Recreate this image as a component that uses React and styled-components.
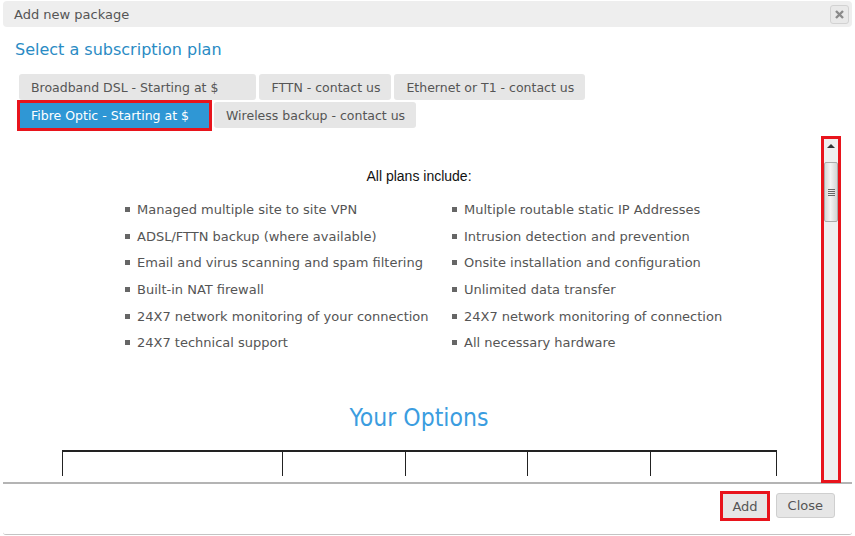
import React from 'react';
import styled, { createGlobalStyle } from 'styled-components';

const GlobalStyle = createGlobalStyle`
  html, body {
    margin: 0;
    padding: 0;
    background: #fff;
  }
  body {
    font-family: "DejaVu Sans", Verdana, sans-serif;
    font-size: 13px;
    color: #555;
  }
`;

const RED = '#e8141c';

const Dialog = styled.div`
  width: 849px;
  margin: 1px 0 0 3px;
  border-bottom: 1px solid #c4c4c4;
  border-radius: 0 0 3px 3px;
  background: #fff;
`;

const TitleBar = styled.div`
  height: 26px;
  display: flex;
  align-items: center;
  justify-content: space-between;
  padding: 0 3px 0 11px;
  background: #eeeeee;
  border-radius: 4px;
  color: #555;
  font-size: 13px;
`;

const CloseX = styled.button`
  width: 19px;
  height: 19px;
  padding: 0;
  display: flex;
  align-items: center;
  justify-content: center;
  border: 1px solid #d2d2d2;
  border-radius: 3px;
  background: #e9e9e9;
`;

const Heading = styled.h2`
  margin: 12px 0 0 12px;
  font-size: 16px;
  font-weight: normal;
  line-height: 22px;
  color: #2a8bc4;
`;

const TabGroup = styled.div`
  margin: 13px 0 0 16px;
  display: flex;
  flex-direction: column;
  gap: 2px;
`;

const TabRow = styled.div`
  display: flex;
  gap: 3px;
`;

const Tab = styled.div`
  height: 26px;
  display: flex;
  align-items: center;
  padding: 0 ${({ $padRight }) => $padRight || 11}px 0 12px;
  border-radius: 3px;
  white-space: nowrap;
  font-size: 12.5px;
  background: ${({ $active }) => ($active ? '#2f97d5' : '#e6e6e6')};
  color: ${({ $active }) => ($active ? '#fff' : '#555')};
  ${({ $active }) => $active && `
    border-radius: 0;
    outline: 3px solid ${RED};
    outline-offset: -1px;
    margin-right: 1px;
    height: 27px;
  `}
`;

const ScrollRegion = styled.div`
  margin-top: 5px;
  display: flex;
  padding-left: 12px;
`;

const Content = styled.div`
  flex: 1;
  height: 342px;
  overflow: hidden;
  padding-top: 34px;
  box-sizing: border-box;
`;

const Lead = styled.div`
  text-align: center;
  font-family: "Liberation Sans", Arial, sans-serif;
  font-size: 14px;
  line-height: 16px;
  color: #111;
`;

const Features = styled.div`
  margin: 12px 0 0 110px;
  display: grid;
  grid-template-columns: 327px 300px;
`;

const FeatureList = styled.ul`
  margin: 0;
  padding: 0;
  list-style: none;
`;

const Feature = styled.li`
  display: flex;
  align-items: center;
  height: 26.7px;
  color: #555;
  white-space: nowrap;

  &::before {
    content: '';
    width: 5px;
    height: 5px;
    margin-right: 7px;
    background: #666;
  }
`;

const OptionsTitle = styled.h3`
  margin: 47px 0 0;
  text-align: center;
  font-family: "DejaVu Sans Condensed", "Liberation Sans Narrow", sans-serif;
  font-size: 24.5px;
  font-weight: normal;
  line-height: 30px;
  color: #3b9de0;
`;

const OptionsTable = styled.table`
  margin: 17px auto 0;
  width: 715px;
  border-collapse: collapse;
  border-top: 2px solid #222;
`;

const Cell = styled.td`
  height: 40px;
  border-left: 1px solid #222;
  border-right: 1px solid #222;
  padding: 0;
`;

const Scrollbar = styled.div`
  width: 16px;
  height: 343px;
  margin-top: 4px;
  position: relative;
  background: #efefef;
  outline: 3px solid ${RED};
  outline-offset: -1px;
`;

const UpArrow = styled.div`
  position: absolute;
  top: 6px;
  left: 4px;
  width: 0;
  height: 0;
  border-left: 4px solid transparent;
  border-right: 4px solid transparent;
  border-bottom: 4px solid #333;
`;

const Thumb = styled.div`
  position: absolute;
  top: 24px;
  left: 1px;
  width: 12px;
  height: 58px;
  border: 1px solid #aaa;
  border-radius: 2px;
  background: linear-gradient(to right, #d8d8d8, #f4f4f4 45%, #d4d4d4);
  display: flex;
  flex-direction: column;
  align-items: center;
  justify-content: center;
  gap: 1px;
`;

const Grip = styled.span`
  width: 7px;
  height: 1px;
  background: #666;
`;

const Footer = styled.div`
  margin-top: 1px;
  border-top: 2px solid #b4b4b4;
  height: 52px;
  display: flex;
  justify-content: flex-end;
  align-items: flex-start;
  gap: 8px;
  padding: 9px 17px 0 0;
  box-sizing: border-box;
`;

const Button = styled.button`
  height: 25px;
  padding: 0 ${({ $marked }) => ($marked ? 9 : 11)}px;
  font-family: "DejaVu Sans", Verdana, sans-serif;
  font-size: 13px;
  color: #555;
  background: #e6e6e6;
  border: 1px solid #cfcfcf;
  border-radius: 3px;
  ${({ $marked }) => $marked && `
    border-radius: 0;
    height: 26px;
    outline: 3px solid ${RED};
    outline-offset: -1px;
  `}
`;

const leftFeatures = [
  'Managed multiple site to site VPN',
  'ADSL/FTTN backup (where available)',
  'Email and virus scanning and spam filtering',
  'Built-in NAT firewall',
  '24X7 network monitoring of your connection',
  '24X7 technical support',
];

const rightFeatures = [
  'Multiple routable static IP Addresses',
  'Intrusion detection and prevention',
  'Onsite installation and configuration',
  'Unlimited data transfer',
  '24X7 network monitoring of connection',
  'All necessary hardware',
];

const columnWidths = [221, 123, 122, 123, 125];

export default function App() {
  return (
    <>
      <GlobalStyle />
      <Dialog>
        <TitleBar>
          <span>Add new package</span>
          <CloseX aria-label="close">
            <svg width="9" height="9" viewBox="0 0 9 9">
              <path d="M1 1L8 8M8 1L1 8" stroke="#8a8a8a" strokeWidth="2.4" />
            </svg>
          </CloseX>
        </TitleBar>

        <Heading>Select a subscription plan</Heading>

        <TabGroup>
          <TabRow>
            <Tab $padRight={38}>Broadband DSL - Starting at $</Tab>
            <Tab>FTTN - contact us</Tab>
            <Tab>Ethernet or T1 - contact us</Tab>
          </TabRow>
          <TabRow>
            <Tab $active $padRight={21}>Fibre Optic - Starting at $</Tab>
            <Tab>Wireless backup - contact us</Tab>
          </TabRow>
        </TabGroup>

        <ScrollRegion>
          <Content>
            <Lead>All plans include:</Lead>
            <Features>
              <FeatureList>
                {leftFeatures.map((f) => <Feature key={f}>{f}</Feature>)}
              </FeatureList>
              <FeatureList>
                {rightFeatures.map((f) => <Feature key={f}>{f}</Feature>)}
              </FeatureList>
            </Features>
            <OptionsTitle>Your Options</OptionsTitle>
            <OptionsTable>
              <tbody>
                <tr>
                  {columnWidths.map((w, i) => <Cell key={i} style={{ width: w }} />)}
                </tr>
              </tbody>
            </OptionsTable>
          </Content>
          <Scrollbar>
            <UpArrow />
            <Thumb>
              <Grip /><Grip /><Grip /><Grip />
            </Thumb>
          </Scrollbar>
          <div style={{ width: 13 }} />
        </ScrollRegion>

        <Footer>
          <Button $marked>Add</Button>
          <Button>Close</Button>
        </Footer>
      </Dialog>
    </>
  );
}
